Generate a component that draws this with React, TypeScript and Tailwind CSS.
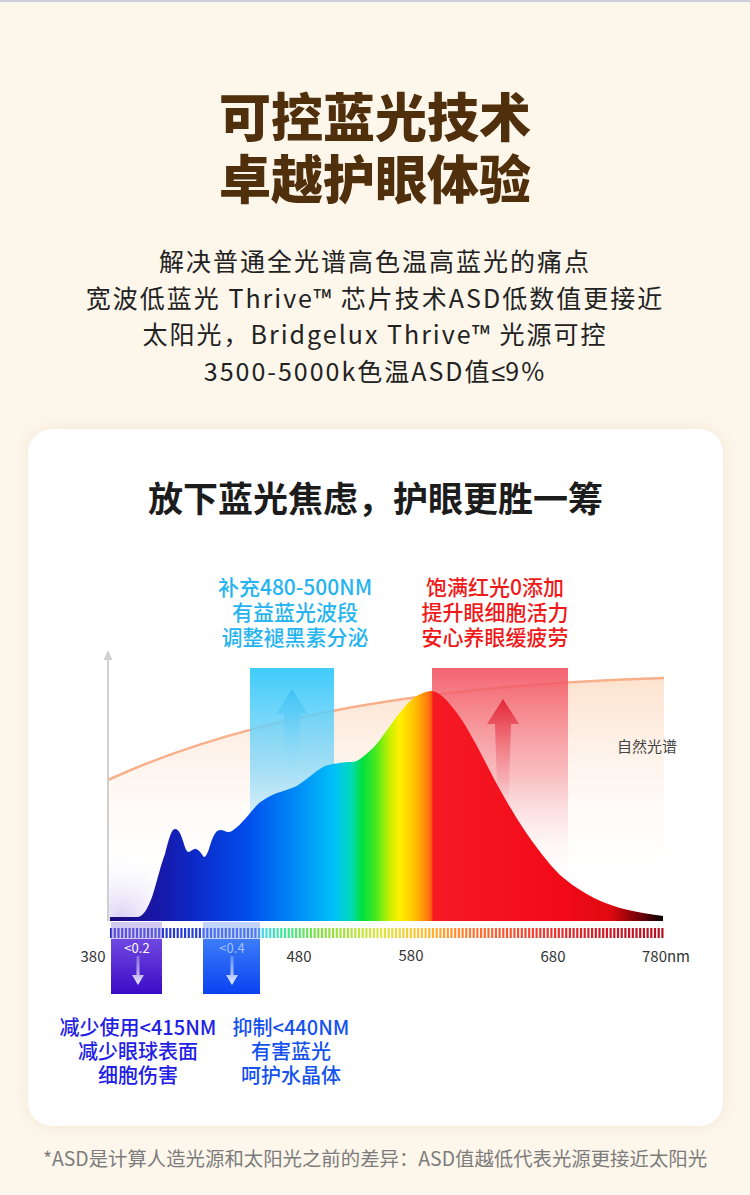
import React from 'react';

// tick colours along the wavelength scale (x in page px)
const tickStops: [number, string][] = [
  [110, '#2222c8'],
  [255, '#2a5ae8'],
  [262, '#40dce8'],
  [285, '#40e890'],
  [320, '#84e040'],
  [380, '#e0e640'],
  [420, '#ffc030'],
  [470, '#ff7830'],
  [540, '#f03a30'],
  [600, '#d01c28'],
  [664, '#b01020'],
];

const hex = (c: string) => [1, 3, 5].map((i) => parseInt(c.slice(i, i + 2), 16));

const tickColor = (x: number) => {
  for (let i = 0; i < tickStops.length - 1; i++) {
    const [x0, c0] = tickStops[i];
    const [x1, c1] = tickStops[i + 1];
    if (x >= x0 && x <= x1) {
      const t = (x - x0) / (x1 - x0);
      const a = hex(c0);
      const b = hex(c1);
      const m = a.map((v, k) => Math.round(v + (b[k] - v) * t));
      return `rgb(${m[0]},${m[1]},${m[2]})`;
    }
  }
  return tickStops[tickStops.length - 1][1];
};

const ticks = Array.from({ length: 150 }, (_, i) => 110 + i * 3.7);

const spectrumPath =
  'M110,920 L110,916 L138,916 C144,915 149,905 153,893 C157,880 161,863 165,853 C168,842 171,828 175,828 ' +
  'C179,828 181,834 183,840 C185,846 186,851 189,851 C192,850 194,847 196,848 C199,849 201,852 203,855 ' +
  'C205,858 207,853 209,848 C212,838 215,829 220,829 C225,829 227,833 232,830 C238,826 242,821 245,818 ' +
  'C252,810 256,804 262,800 C268,796 272,794 277,792 C283,790 287,789 292,787 C298,785 302,781 308,777 ' +
  'C314,772 319,768 325,765 C335,762 345,761 352,761 C358,761 364,755 373,747 C382,738 392,720 407,703 ' +
  'C415,695 424,690 432,690 C440,691 448,700 457,712 C470,730 482,755 490,770 C500,790 512,810 523,827 ' +
  'C535,845 548,862 560,874 C575,887 595,900 620,907 C640,912 655,914 663,915 L663,920 Z';

const SpectrumChart: React.FC = () => (
  <svg width="695" height="352" viewBox="28 648 695 352" className="block">
    <defs>
      <linearGradient id="peach" gradientUnits="userSpaceOnUse" x1="0" y1="680" x2="0" y2="890">
        <stop offset="0" stopColor="#fcdcc4" stopOpacity="0.8" />
        <stop offset="0.45" stopColor="#fdf0e6" stopOpacity="0.6" />
        <stop offset="1" stopColor="#ffffff" stopOpacity="0" />
      </linearGradient>
      <radialGradient id="lav" gradientUnits="userSpaceOnUse" cx="122" cy="918" r="70">
        <stop offset="0" stopColor="#d6ccf4" stopOpacity="0.9" />
        <stop offset="1" stopColor="#ffffff" stopOpacity="0" />
      </radialGradient>
      <linearGradient id="blueBand" gradientUnits="userSpaceOnUse" x1="0" y1="667" x2="0" y2="900">
        <stop offset="0" stopColor="#36c8fa" stopOpacity="0.95" />
        <stop offset="0.45" stopColor="#8ad8f7" stopOpacity="0.75" />
        <stop offset="1" stopColor="#e8f6fd" stopOpacity="0" />
      </linearGradient>
      <linearGradient id="redBand" gradientUnits="userSpaceOnUse" x1="0" y1="667" x2="0" y2="885">
        <stop offset="0" stopColor="#f24e5c" stopOpacity="0.88" />
        <stop offset="0.5" stopColor="#f59aa2" stopOpacity="0.6" />
        <stop offset="1" stopColor="#ffffff" stopOpacity="0" />
      </linearGradient>
      <linearGradient id="blueArrow" gradientUnits="userSpaceOnUse" x1="0" y1="688" x2="0" y2="795">
        <stop offset="0" stopColor="#3cc2f6" stopOpacity="1" />
        <stop offset="1" stopColor="#bfe9fb" stopOpacity="0" />
      </linearGradient>
      <linearGradient id="redArrow" gradientUnits="userSpaceOnUse" x1="0" y1="698" x2="0" y2="815">
        <stop offset="0" stopColor="#e42636" stopOpacity="1" />
        <stop offset="1" stopColor="#f7b0b6" stopOpacity="0" />
      </linearGradient>
      <linearGradient id="spec" gradientUnits="userSpaceOnUse" x1="110" y1="0" x2="664" y2="0">
        <stop offset="0" stopColor="#1a0c7a" />
        <stop offset="0.072" stopColor="#1a14a0" />
        <stop offset="0.162" stopColor="#0b2ccc" />
        <stop offset="0.253" stopColor="#0050ec" />
        <stop offset="0.343" stopColor="#0090f8" />
        <stop offset="0.406" stopColor="#00c0f8" />
        <stop offset="0.433" stopColor="#00d8c0" />
        <stop offset="0.455" stopColor="#00e040" />
        <stop offset="0.478" stopColor="#40e820" />
        <stop offset="0.505" stopColor="#c8f000" />
        <stop offset="0.523" stopColor="#fff000" />
        <stop offset="0.55" stopColor="#ffc000" />
        <stop offset="0.574" stopColor="#ff7a10" />
        <stop offset="0.581" stopColor="#ff5010" />
        <stop offset="0.583" stopColor="#f51a24" />
        <stop offset="0.812" stopColor="#f20a18" />
        <stop offset="0.903" stopColor="#e00a10" />
        <stop offset="0.957" stopColor="#700008" />
        <stop offset="1" stopColor="#000000" />
      </linearGradient>
      <linearGradient id="purpleBox" gradientUnits="userSpaceOnUse" x1="0" y1="938" x2="0" y2="993">
        <stop offset="0" stopColor="#7048e0" />
        <stop offset="1" stopColor="#3a0cc6" />
      </linearGradient>
      <linearGradient id="blueBox" gradientUnits="userSpaceOnUse" x1="0" y1="938" x2="0" y2="993">
        <stop offset="0" stopColor="#3c7cf8" />
        <stop offset="1" stopColor="#0a42f0" />
      </linearGradient>
      <linearGradient id="downArrow" x1="0" y1="0" x2="0" y2="1">
        <stop offset="0" stopColor="#ffffff" stopOpacity="0.25" />
        <stop offset="1" stopColor="#ffffff" stopOpacity="0.9" />
      </linearGradient>
    </defs>

    {/* natural light curve + fill */}
    <path d="M108,779 C240,718 420,684 664,677 L664,918 L108,918 Z" fill="url(#peach)" />
    <rect x="108" y="840" width="80" height="80" fill="url(#lav)" />
    <path d="M108,779 C240,718 420,684 664,677" fill="none" stroke="#f7b08a" strokeWidth="2.5" />

    {/* highlight bands */}
    <rect x="250" y="667" width="84" height="235" fill="url(#blueBand)" />
    <rect x="432" y="667" width="136" height="220" fill="url(#redBand)" />
    <path d="M292,688 L308,713 L300,713 L297,795 L287,795 L284,713 L276,713 Z" fill="url(#blueArrow)" />
    <path d="M503,698 L519,723 L511,723 L508,815 L498,815 L495,723 L487,723 Z" fill="url(#redArrow)" />

    {/* spectrum */}
    <path d={spectrumPath} fill="url(#spec)" />

    {/* axis */}
    <line x1="108" y1="656" x2="108" y2="920" stroke="#d0d0d0" strokeWidth="2" />
    <polygon points="103.5,659 108,649 112.5,659" fill="#d0d0d0" />

    {/* wavelength ticks */}
    {ticks.map((x) => (
      <rect key={x} x={x} y="927" width="2.2" height="10" fill={tickColor(x)} />
    ))}

    {/* low-value boxes */}
    <rect x="111" y="921" width="51" height="17" fill="#9c88e8" fillOpacity="0.45" />
    <rect x="111" y="938" width="51" height="55" fill="url(#purpleBox)" />
    <rect x="203" y="921" width="57" height="17" fill="#7aa0f8" fillOpacity="0.45" />
    <rect x="203" y="938" width="57" height="55" fill="url(#blueBox)" />
    <text x="137" y="952" textAnchor="middle" fontSize="13" fill="#ffffff">&lt;0.2</text>
    <text x="232" y="952" textAnchor="middle" fontSize="13" fill="#a4c0ff">&lt;0.4</text>
    <path d="M136.5,955 L139.5,955 L139.5,974 L144,974 L138,984 L132,974 L136.5,974 Z" fill="url(#downArrow)" />
    <path d="M230.5,955 L233.5,955 L233.5,974 L238,974 L232,984 L226,974 L230.5,974 Z" fill="url(#downArrow)" />

    {/* labels */}
    <g fontSize="15" fill="#333333" textAnchor="middle">
      <text x="93" y="961">380</text>
      <text x="299" y="961">480</text>
      <text x="411" y="960">580</text>
      <text x="553" y="961">680</text>
      <text x="666" y="961">780nm</text>
    </g>
    <text x="647" y="751" textAnchor="middle" fontSize="15" fill="#444444">自然光谱</text>
  </svg>
);

const App: React.FC = () => {
  return (
    <div className="w-[750px] min-h-[1195px] bg-[#fdf6eb] font-['Noto_Sans_CJK_SC','Noto_Sans',sans-serif] overflow-hidden">
      <div className="h-[2px] bg-[#cdd0dc]" />

      <h1 className="pt-[82px] text-center text-[52px] leading-[62px] font-black text-[#4f2f0c]">
        <div>可控蓝光技术</div>
        <div>卓越护眼体验</div>
      </h1>

      <div className="mt-[34px] text-center text-[25px] leading-[36.7px] tracking-[2px] text-[#222]">
        <p>解决普通全光谱高色温高蓝光的痛点</p>
        <p>宽波低蓝光 Thrive™ 芯片技术ASD低数值更接近</p>
        <p>太阳光，Bridgelux Thrive™ 光源可控</p>
        <p className="h-[36.7px]">
          3500-5000k色温ASD值<span className="font-['Liberation_Sans',sans-serif] tracking-normal leading-none">≤</span>9%
        </p>
      </div>

      <div className="mt-[40px] ml-[28px] w-[695px] h-[697px] bg-white rounded-[24px] shadow-[0_0_16px_rgba(200,170,130,0.18)] flex flex-col">
        <h2 className="pt-[46px] text-center text-[35px] leading-[44px] font-bold text-[#1c1c1c]">
          放下蓝光焦虑，护眼更胜一筹
        </h2>

        <div className="mt-[55px] ml-[177px] flex gap-[20px] text-[21px] leading-[25px] font-medium text-center">
          <div className="w-[180px] text-[#26b4f0]">
            <p>补充480-500NM</p>
            <p>有益蓝光波段</p>
            <p>调整褪黑素分泌</p>
          </div>
          <div className="w-[180px] text-[#f01818]">
            <p>饱满红光0添加</p>
            <p>提升眼细胞活力</p>
            <p>安心养眼缓疲劳</p>
          </div>
        </div>

        <SpectrumChart />

        <div className="mt-[14px] ml-[25px] flex gap-[8px] text-[20px] leading-[24px] font-medium text-center">
          <div className="w-[170px] text-[#1e20e6]">
            <p>减少使用&lt;415NM</p>
            <p>减少眼球表面</p>
            <p>细胞伤害</p>
          </div>
          <div className="w-[120px] text-[#1452ee]">
            <p>抑制&lt;440NM</p>
            <p>有害蓝光</p>
            <p>呵护水晶体</p>
          </div>
        </div>
      </div>

      <p className="mt-[18px] text-center text-[19.4px] leading-[28px] text-[#7c7c7c]">
        *ASD是计算人造光源和太阳光之前的差异：ASD值越低代表光源更接近太阳光
      </p>
    </div>
  );
};

export default App;
